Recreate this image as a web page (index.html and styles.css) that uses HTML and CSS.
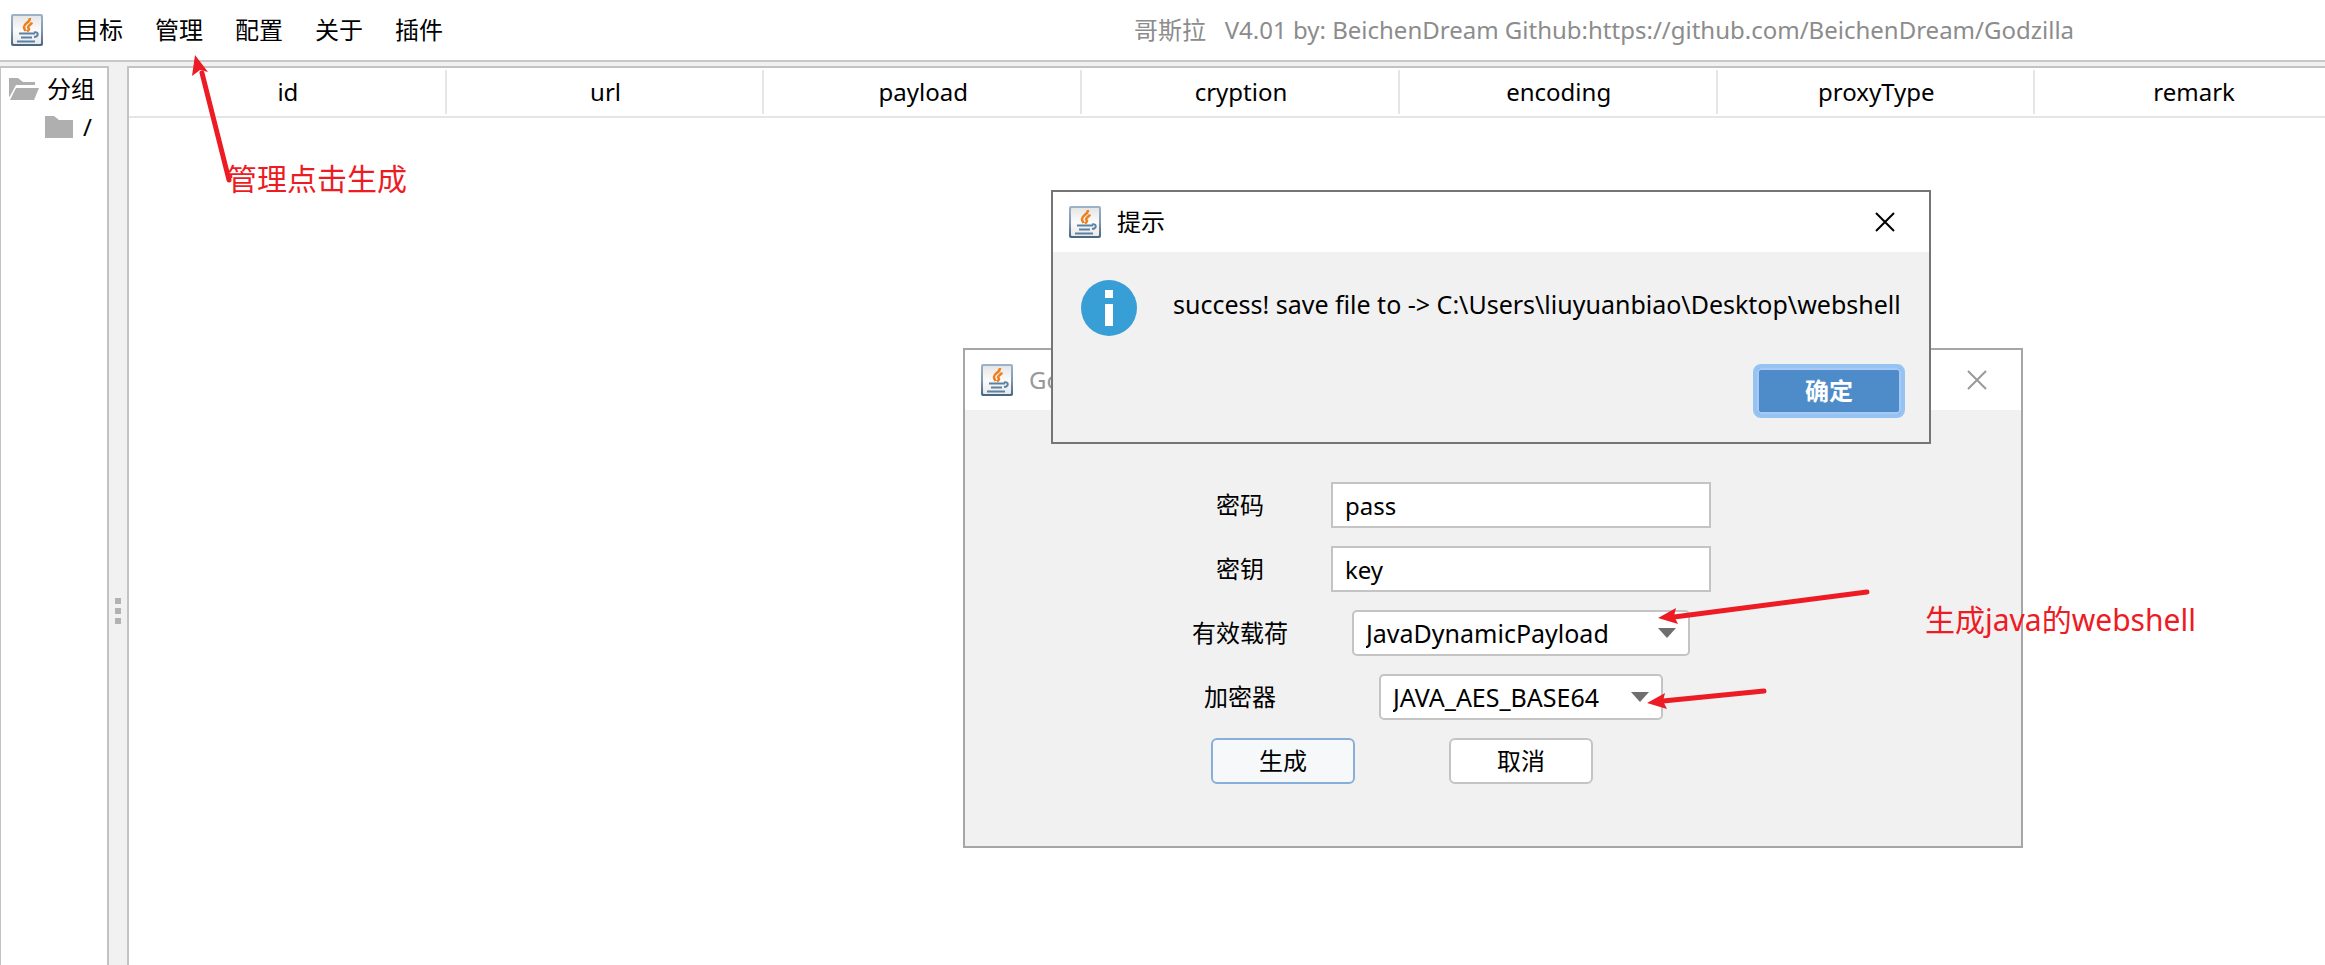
FILE: index.html
```html
<!DOCTYPE html>
<html lang="zh-CN">
<head>
<meta charset="utf-8">
<title>哥斯拉</title>
<link rel="stylesheet" href="styles.css">
</head>
<body>
<svg class="defs" aria-hidden="true">
  <defs>
    <linearGradient id="frame" x1="0" y1="0" x2="0" y2="1">
      <stop offset="0" stop-color="#9db4ca"/>
      <stop offset="0.5" stop-color="#7f99b2"/>
      <stop offset="1" stop-color="#46647f"/>
    </linearGradient>
    <linearGradient id="face" x1="0" y1="0" x2="0" y2="1">
      <stop offset="0" stop-color="#e6e6e6"/>
      <stop offset="0.5" stop-color="#fbfbfb"/>
      <stop offset="1" stop-color="#e9e9e9"/>
    </linearGradient>
    <symbol id="java" viewBox="0 0 32 32">
      <rect x="0" y="0" width="32" height="32" rx="2" fill="url(#frame)"/>
      <rect x="2" y="2" width="28" height="28" rx="1" fill="url(#face)"/>
      <path d="M19 4c0 5-6 5-6 9 0 2 1 2.500 1.500 4M21 8.500c-1 2.500-4 3-4 5 2 1 1 2.500-1 4" fill="none" stroke="#ee7f1d" stroke-width="2.500"/>
      <path d="M8 19.500h16M10 23.500h11M6 27.500h18" fill="none" stroke="#5c82a3" stroke-width="2"/>
      <path d="M23 18.500c5-1 5 4 0 4.500" fill="none" stroke="#5c82a3" stroke-width="2"/>
    </symbol>
  </defs>
</svg>

<header class="menubar">
  <svg class="java-icon"><use href="#java"/></svg>
  <nav class="menu">
    <button type="button">目标</button>
    <button type="button">管理</button>
    <button type="button">配置</button>
    <button type="button">关于</button>
    <button type="button">插件</button>
  </nav>
  <h1 class="app-title">哥斯拉&nbsp;&nbsp; V4.01 by: BeichenDream Github:https://github.com/BeichenDream/Godzilla</h1>
</header>

<main class="workspace">
  <aside class="tree">
    <div class="tree-row">
      <svg class="folder" viewBox="0 0 30 22"><path d="M0 0h9l5 4h12v3H7L1 18 0 19zM7 10h23l-5 12H1z"/></svg>
      <span>分组</span>
    </div>
    <div class="tree-row child">
      <svg class="folder" viewBox="0 0 30 22"><path d="M0 0h9l5 4h14v18H0z"/></svg>
      <span>/</span>
    </div>
  </aside>
  <div class="splitter"><i></i><i></i><i></i></div>
  <section class="shells">
    <table>
      <thead>
        <tr><th>id</th><th>url</th><th>payload</th><th>cryption</th><th>encoding</th><th>proxyType</th><th>remark</th></tr>
      </thead>
    </table>
  </section>
</main>

<section class="dialog generate">
  <header class="titlebar">
    <svg class="java-icon"><use href="#java"/></svg>
    <h2>Godzilla</h2>
    <button type="button" class="close" aria-label="关闭"><svg viewBox="0 0 20 20"><path d="M1 1l18 18M19 1L1 19"/></svg></button>
  </header>
  <form class="form">
    <label for="pass">密码</label>
    <input id="pass" type="text" value="pass">
    <label for="key">密钥</label>
    <input id="key" type="text" value="key">
    <label for="payload">有效载荷</label>
    <div class="combo payload">
      <select id="payload"><option>JavaDynamicPayload</option></select>
      <svg viewBox="0 0 18 10"><path d="M0 0h18L9 10z"/></svg>
    </div>
    <label for="cryption">加密器</label>
    <div class="combo cryption">
      <select id="cryption"><option>JAVA_AES_BASE64</option></select>
      <svg viewBox="0 0 18 10"><path d="M0 0h18L9 10z"/></svg>
    </div>
    <div class="actions">
      <button type="button" class="primary">生成</button>
      <button type="button">取消</button>
    </div>
  </form>
</section>

<section class="dialog message">
  <header class="titlebar">
    <svg class="java-icon"><use href="#java"/></svg>
    <h2>提示</h2>
    <button type="button" class="close" aria-label="关闭"><svg viewBox="0 0 20 20"><path d="M1 1l18 18M19 1L1 19"/></svg></button>
  </header>
  <div class="message-body">
    <svg class="info" viewBox="0 0 56 56"><circle cx="28" cy="28" r="28" fill="#389fd6"/><path d="M24 10h8v8h-8zM24 24h8v22h-8z" fill="#fff"/></svg>
    <p>success! save file to -&gt; C:\Users\liuyuanbiao\Desktop\webshell</p>
  </div>
  <div class="message-actions"><button type="button" class="ok">确定</button></div>
</section>

<svg class="arrow arrow-menu" viewBox="0 0 44 132">
  <path class="shaft" d="M10 18L37 125"/><path d="M3 0L16 17L8 15L0 21z"/>
</svg>
<svg class="arrow arrow-payload" viewBox="0 0 216 36">
  <path class="shaft" d="M16 29L209 4"/><path d="M0 30L18 20L16 28L20 36z"/>
</svg>
<svg class="arrow arrow-cryption" viewBox="0 0 124 24">
  <path class="shaft" d="M16 15L117 5"/><path d="M0 17L18 7L16 15L20 23z"/>
</svg>
<p class="note note-menu">管理点击生成</p>
<p class="note note-shell">生成java的webshell</p>
</body>
</html>
```
FILE: styles.css
```css
* { box-sizing: border-box; }

body {
  margin: 0;
  height: 100vh;
  overflow: hidden;
  position: relative;
  display: flex;
  flex-direction: column;
  background: #fff;
  color: #000;
  font: 24px/32px "Noto Sans", "Noto Sans CJK SC", sans-serif;
}

button, input, select { font: inherit; color: inherit; margin: 0; }
h1, h2, p { margin: 0; font-size: 24px; font-weight: 400; }
.defs { position: absolute; width: 0; height: 0; }
.java-icon { width: 32px; height: 32px; flex: none; }

.menubar {
  display: flex;
  align-items: center;
  height: 62px;
  flex: none;
  padding-left: 11px;
  border-bottom: 2px solid #c8c8c8;
}
.menu { display: flex; padding-left: 16px; }
.menu button { padding: 0 16px; border: 0; background: none; white-space: nowrap; }
.app-title { margin-left: 675px; color: #8c8c8c; white-space: nowrap; }

.workspace {
  display: flex;
  flex: 1;
  min-height: 0;
  padding-top: 4px;
  background: #f1f1f1;
}
.tree {
  width: 109px;
  flex: none;
  padding: 2px 0 0 8px;
  background: #fff;
  border: 2px solid #c3c3c3;
  border-left-width: 1px;
  border-bottom: 0;
}
.tree-row { display: flex; align-items: center; gap: 8px; height: 38px; white-space: nowrap; }
.tree-row.child { padding-left: 36px; }
.folder { width: 30px; height: 22px; flex: none; fill: #afafaf; }
.splitter {
  width: 18px;
  flex: none;
  display: flex;
  flex-direction: column;
  align-items: center;
  justify-content: center;
  gap: 4px;
  padding-top: 191px;
}
.splitter i { width: 6px; height: 6px; background: #b2b2b2; }
.shells {
  flex: 1;
  min-width: 0;
  overflow: hidden;
  background: #fff;
  border: 2px solid #c3c3c3;
  border-right: 0;
  border-bottom: 0;
}
.shells table {
  width: calc(100% + 28px);
  table-layout: fixed;
  border-collapse: separate;
  border-spacing: 0;
  border-bottom: 2px solid #e5e5e5;
}
.shells th {
  height: 48px;
  padding: 0;
  font-weight: 400;
  background: linear-gradient(#e5e5e5, #e5e5e5) right center / 2px 44px no-repeat;
}

.dialog { position: absolute; background: #f1f1f1; border: 2px solid #a6a6a6; }
.titlebar {
  display: flex;
  align-items: center;
  gap: 16px;
  height: 60px;
  padding: 0 34px 0 16px;
  background: #fff;
}
.titlebar h2 { flex: 1; }
.close { display: flex; padding: 0; border: 0; background: none; }
.close svg { width: 20px; height: 20px; fill: none; stroke: currentColor; stroke-width: 2; }

.generate { left: 963px; top: 348px; width: 1060px; height: 500px; }
.generate .titlebar { color: #999; }
.form {
  display: grid;
  grid-template-columns: 96px 380px;
  grid-auto-rows: 46px;
  gap: 18px 43px;
  align-items: center;
  padding: 72px 0 0 227px;
}
.form label { text-align: center; white-space: nowrap; }
.form input, .form select, .actions button {
  height: 46px;
  border: 2px solid #c4c4c4;
  background: #fff;
}
.form input { width: 100%; padding: 0 12px; }
.combo { display: grid; align-items: center; justify-self: center; }
.combo select, .combo svg { grid-area: 1 / 1; }
.form select { width: 100%; padding: 0 12px; border-radius: 5px; font-size: 25px; appearance: none; }
.combo svg { width: 18px; height: 10px; margin-right: 14px; justify-self: end; fill: #6e6e6e; pointer-events: none; }
.combo.payload { width: 338px; }
.combo.cryption { width: 284px; }
.actions { grid-column: 1 / -1; display: flex; gap: 94px; padding-left: 19px; }
.actions button { width: 144px; padding: 0; border-radius: 6px; }
.actions .primary { border-color: #87afda; background: #f6f8fa; }

.message { left: 1051px; top: 190px; width: 880px; height: 254px; border-color: #757575; }
.message-body { display: flex; gap: 36px; padding: 28px 24px 0 28px; }
.message-body p { font-size: 25px; white-space: nowrap; padding-top: 8px; }
.info { width: 56px; height: 56px; flex: none; }
.message-actions { display: flex; justify-content: flex-end; padding: 28px 24px 0 0; }
.ok {
  width: 152px;
  height: 54px;
  padding: 0;
  color: #fff;
  font-weight: 700;
  background: #4d8bc9;
  border: 4px solid #97c3f3;
  border-radius: 8px;
  box-shadow: inset 0 0 0 2px #a8c9f5;
}

.arrow { position: absolute; fill: #ed1c24; }
.arrow .shaft { fill: none; stroke: #ed1c24; stroke-width: 5; stroke-linecap: round; }
.arrow-menu { left: 192px; top: 55px; width: 44px; height: 132px; }
.arrow-payload { left: 1658px; top: 588px; width: 216px; height: 36px; }
.arrow-cryption { left: 1647px; top: 686px; width: 124px; height: 24px; }
.note { position: absolute; font-size: 30px; line-height: 40px; color: #ed1c24; white-space: nowrap; }
.note-menu { left: 227px; top: 159px; }
.note-shell { left: 1925px; top: 600px; }
```
